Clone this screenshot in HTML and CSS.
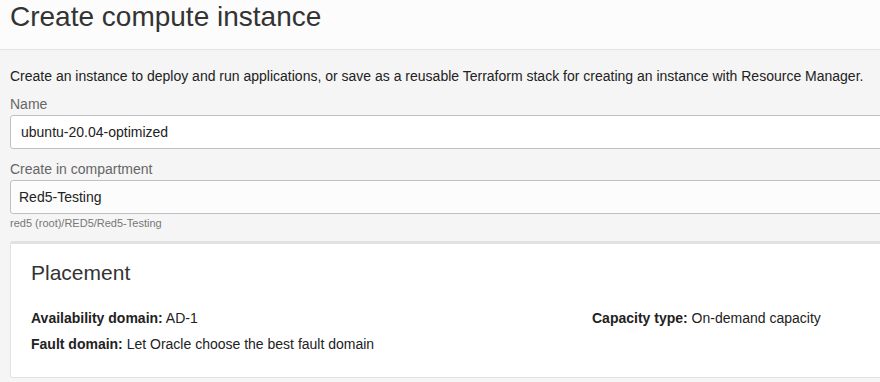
FILE: index.html
```html
<!DOCTYPE html>
<html lang="en">
<head>
    <meta charset="UTF-8">
    <meta name="viewport" content="width=device-width, initial-scale=1.0">
    <title>Create compute instance</title>
    <link rel="stylesheet" href="styles.css">
</head>
<body>

<div class="header">
    <h1 class="page-title">Create compute instance</h1>
</div>

<div class="content">
    <p class="intro">Create an instance to deploy and run applications, or save as a reusable Terraform stack for creating an instance with Resource Manager.</p>

    <div class="field">
        <label class="field-label" for="name">Name</label>
        <input class="text-input" id="name" type="text" value="ubuntu-20.04-optimized">
    </div>

    <div class="field">
        <label class="field-label" for="compartment">Create in compartment</label>
        <div class="select-input" id="compartment">Red5-Testing</div>
        <p class="field-hint">red5 (root)/RED5/Red5-Testing</p>
    </div>

    <div class="panel">
        <h2 class="panel-title">Placement</h2>
        <div class="panel-grid">
            <p class="prop"><b>Availability domain:</b> AD-1</p>
            <p class="prop"><b>Capacity type:</b> On-demand capacity</p>
            <p class="prop"><b>Fault domain:</b> Let Oracle choose the best fault domain</p>
        </div>
    </div>
</div>

</body>
</html>
```

FILE: styles.css
```css
body {
    margin: 0;
    font-family: "Liberation Sans", Arial, sans-serif;
    color: #333;
    background-color: #f5f5f5;
    overflow: hidden;
}
.header {
    height: 49px;
    background-color: #fcfcfc;
    border-bottom: 1px solid #e4e4e4;
    padding-left: 10px;
}
.page-title {
    margin: 0;
    padding-top: 2px;
    font-size: 28px;
    font-weight: normal;
    line-height: 30px;
    color: #333;
}
.content {
    width: 1200px;
    padding: 17px 0 0 10px;
}
.intro {
    margin: 0 0 10px;
    font-size: 14px;
    line-height: 18px;
    color: #222;
}
.field {
    margin-bottom: 11px;
}
.field-label {
    display: block;
    font-size: 14px;
    line-height: 18px;
    color: #666;
    margin-bottom: 2px;
}
.text-input,
.select-input {
    box-sizing: border-box;
    display: block;
    width: 100%;
    height: 34px;
    padding: 0 10px;
    border: 1px solid #c0c0c4;
    border-radius: 3px;
    background-color: #fff;
    font-family: inherit;
    font-size: 14px;
    line-height: 32px;
    color: #222;
    outline: none;
}
.select-input {
    background-color: #fcfcfc;
    padding-left: 8px;
}
.field-hint {
    margin: 2px 0 0;
    font-size: 11px;
    line-height: 14px;
    color: #777;
}
.panel {
    margin-top: 11px;
    background-color: #fff;
    border: 1px solid #e2e2e2;
    border-top: 3px solid #e2e2e2;
    border-radius: 3px;
    padding: 17px 20px 24px;
}
.panel-title {
    margin: 0 0 24px;
    font-size: 21px;
    font-weight: normal;
    line-height: 24px;
    color: #333;
}
.panel-grid {
    display: grid;
    grid-template-columns: 561px 1fr;
    row-gap: 8px;
}
.prop {
    margin: 0;
    font-size: 14px;
    line-height: 18px;
    color: #222;
}
```
